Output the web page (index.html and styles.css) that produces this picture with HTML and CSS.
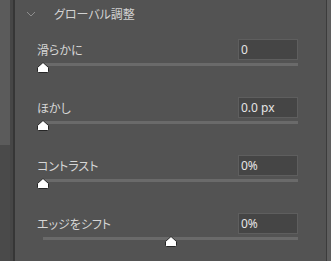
FILE: index.html
```html
<!DOCTYPE html>
<html lang="ja">
<head>
  <meta charset="UTF-8">
  <meta name="viewport" content="width=device-width, initial-scale=1.0">
  <title>グローバル調整</title>
  <link rel="stylesheet" href="styles.css">
</head>
<body>
  <div class="frame">
    <!-- スクロールバー -->
    <div class="scrollbar">
      <div class="scroll-thumb"></div>
    </div>
    <div class="divider"></div>

    <div class="panel">
      <div class="panel-header">
        <svg class="chevron" width="10" height="6" viewBox="0 0 10 6">
          <path d="M1 1 L5 5 L9 1" fill="none" stroke="#8e8e8e" stroke-width="1"/>
        </svg>
        <span class="panel-title">グローバル調整</span>
      </div>

      <div class="control">
        <div class="control-top">
          <span class="control-label">滑らかに</span>
          <div class="value-box">0</div>
        </div>
        <div class="track">
          <svg class="thumb" style="left: 0%" width="12" height="11" viewBox="0 0 12 11"><path d="M6 0.5 L11.5 5.5 V9.5 Q11.5 10.5 10.5 10.5 H1.5 Q0.5 10.5 0.5 9.5 V5.5 Z" fill="#fff" stroke="#262626"/></svg>
        </div>
      </div>

      <div class="control">
        <div class="control-top">
          <span class="control-label">ほかし</span>
          <div class="value-box">0.0 px</div>
        </div>
        <div class="track">
          <svg class="thumb" style="left: 0%" width="12" height="11" viewBox="0 0 12 11"><path d="M6 0.5 L11.5 5.5 V9.5 Q11.5 10.5 10.5 10.5 H1.5 Q0.5 10.5 0.5 9.5 V5.5 Z" fill="#fff" stroke="#262626"/></svg>
        </div>
      </div>

      <div class="control">
        <div class="control-top">
          <span class="control-label">コントラスト</span>
          <div class="value-box">0%</div>
        </div>
        <div class="track">
          <svg class="thumb" style="left: 0%" width="12" height="11" viewBox="0 0 12 11"><path d="M6 0.5 L11.5 5.5 V9.5 Q11.5 10.5 10.5 10.5 H1.5 Q0.5 10.5 0.5 9.5 V5.5 Z" fill="#fff" stroke="#262626"/></svg>
        </div>
      </div>

      <div class="control">
        <div class="control-top">
          <span class="control-label">エッジをシフト</span>
          <div class="value-box">0%</div>
        </div>
        <div class="track">
          <svg class="thumb" style="left: 50%" width="12" height="11" viewBox="0 0 12 11"><path d="M6 0.5 L11.5 5.5 V9.5 Q11.5 10.5 10.5 10.5 H1.5 Q0.5 10.5 0.5 9.5 V5.5 Z" fill="#fff" stroke="#262626"/></svg>
        </div>
      </div>
    </div>

    <div class="edge"></div>
  </div>
</body>
</html>
```
FILE: styles.css
```css
/* Panel de ajustes */
:root {
  --panel-color: #535353;
  --box-color: #454545;
  --box-border: #5e5e5e;
  --track-color: #6a6a6a;
  --label-color: #d6d6d6;
}

body {
  margin: 0;
  padding: 0;
  background-color: var(--panel-color);
  font-family: "Noto Sans CJK JP", sans-serif;
  overflow: hidden;
}

.frame {
  display: flex;
  width: 331px;
  height: 261px;
}

/* Barra de scroll */
.scrollbar {
  width: 10px;
  background-color: #4a4a4a;
}

.scroll-thumb {
  height: 145px;
  background-color: #5b5b5b;
}

.divider {
  width: 3px;
  background-color: #464646;
  border-right: 2px solid #363636;
}

.panel {
  flex: 1;
  display: flex;
  flex-direction: column;
}

.edge {
  width: 4px;
  background-color: #5f5f5f;
  border-left: 1px solid #3c3c3c;
}

/* Cabecera */
.panel-header {
  height: 28px;
  display: flex;
  align-items: center;
  padding-left: 11px;
  box-sizing: border-box;
  padding-bottom: 1px;
}

.chevron {
  display: block;
}

.panel-title {
  margin-left: 18px;
  font-size: 12px;
  color: #d2d2d2;
  font-feature-settings: "palt";
}

/* Controles */
.control {
  padding: 11px 28px 20px 22px;
}

.control-top {
  display: flex;
  justify-content: space-between;
  align-items: center;
  height: 21px;
}

.control-label {
  font-size: 12px;
  color: var(--label-color);
  font-feature-settings: "palt";
}

.value-box {
  width: 60px;
  height: 21px;
  box-sizing: border-box;
  background-color: var(--box-color);
  border: 1px solid var(--box-border);
  padding-left: 2px;
  font-family: "Noto Sans", sans-serif;
  font-size: 12px;
  line-height: 19px;
  color: #e4e4e4;
}

.track {
  position: relative;
  height: 3px;
  margin: 3px 0 0 6px;
  background-color: var(--track-color);
}

.thumb {
  position: absolute;
  top: -1px;
  margin-left: -6px;
  display: block;
}
```
